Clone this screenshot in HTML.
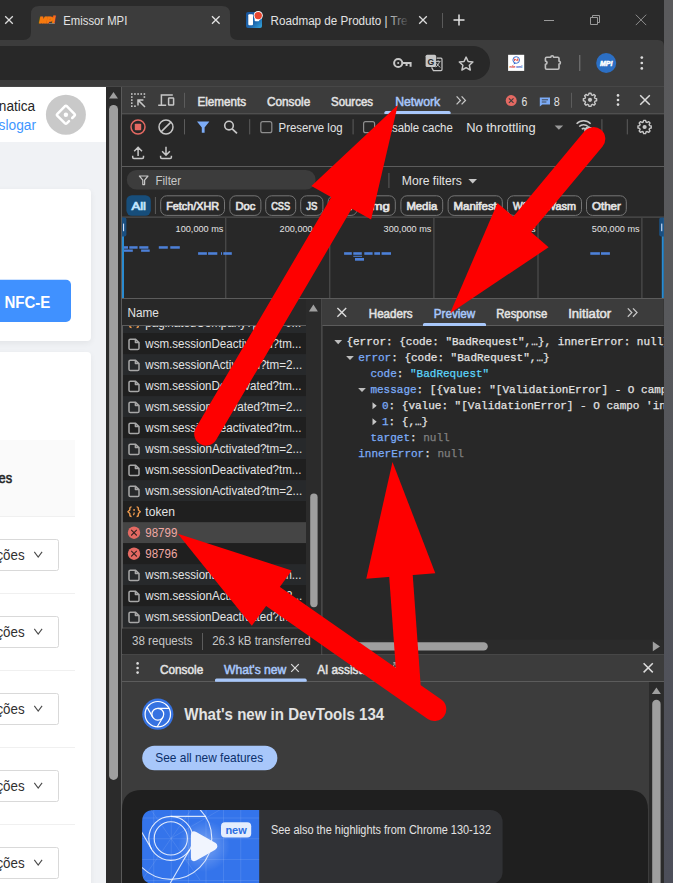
<!DOCTYPE html>
<html lang="pt-BR"><head><meta charset="utf-8"><title>Emissor MPI</title>
<style>
html,body{margin:0;padding:0;background:#282828;overflow:hidden}
body{width:673px;height:883px;font-family:'Liberation Sans',sans-serif}
svg{display:block;position:absolute;left:0;top:0}
text{font-family:'Liberation Sans',sans-serif;white-space:pre}
text.m{font-family:'Liberation Mono','DejaVu Sans Mono',monospace}
</style></head><body>
<svg width="673" height="883" viewBox="0 0 673 883">
<defs><linearGradient id="fade2" x1="0" x2="1" y1="0" y2="0"><stop offset="0" stop-color="#2a2a2a" stop-opacity="0"/><stop offset="1" stop-color="#2a2a2a"/></linearGradient><linearGradient id="trello" x1="0" y1="0" x2="1" y2="1"><stop offset="0" stop-color="#17539a"/><stop offset=".6" stop-color="#1d66ad"/><stop offset="1" stop-color="#35a9df"/></linearGradient><linearGradient id="strip" x1="0" y1="0" x2="0" y2="1"><stop offset="0" stop-color="#5a5a5c"/><stop offset=".35" stop-color="#58595c"/><stop offset="1" stop-color="#4c4e59"/></linearGradient></defs>
<rect x="0" y="0" width="664" height="40" fill="#2a2a2a"/>
<rect x="664" y="0" width="9" height="883" fill="url(#strip)"/>
<path d="M0 40 H658 Q664 40 664 46 V87 H0 Z" fill="#3c3c3c"/>
<rect x="0" y="86" width="664" height="1" fill="#474747"/>
<path d="M23 40 Q31 40 31 32 L31 14 Q31 6 39 6 L222 6 Q230 6 230 14 L230 32 Q230 40 238 40 Z" fill="#3c3c3c"/>
<path d="M5.2 16.2 L12.8 23.8 M12.8 16.2 L5.2 23.8" fill="none" stroke="#dcdcdc" stroke-width="1.3"/>
<text x="39.2" y="22.6" font-size="8.4" fill="#f7790d" font-weight="700" textLength="15.4" lengthAdjust="spacingAndGlyphs" stroke="#f7790d" stroke-width="1.2" font-style="italic">MPi</text>
<rect x="49" y="23.3" width="6" height="0.7" fill="#8a8a8a"/>
<circle cx="53.6" cy="16.6" r="0.8" fill="#f04e23"/>
<text x="63.3" y="24.6" font-size="12" fill="#e3e3e3" textLength="64" lengthAdjust="spacingAndGlyphs">Emissor MPI</text>
<path d="M212 16.2 L219.6 23.8 M219.6 16.2 L212 23.8" fill="none" stroke="#e3e3e3" stroke-width="1.3"/>
<rect x="246" y="12" width="16" height="16" fill="url(#trello)" rx="2"/>
<rect x="248.3" y="14.3" width="4.7" height="10.9" fill="#fff" rx="1"/>
<rect x="254.6" y="14.3" width="4.7" height="7" fill="#fff" rx="1"/>
<circle cx="258.2" cy="15.6" r="4.6" fill="#fff"/>
<circle cx="258.2" cy="15.6" r="3.7" fill="#e8452f"/>
<text x="270.6" y="24.6" font-size="12" fill="#e3e3e3" textLength="137" lengthAdjust="spacingAndGlyphs">Roadmap de Produto | Tre</text>
<rect x="386" y="10" width="24" height="22" fill="url(#fade2)"/>
<path d="M419.2 16.2 L426.8 23.8 M426.8 16.2 L419.2 23.8" fill="none" stroke="#dcdcdc" stroke-width="1.3"/>
<rect x="442" y="13" width="1" height="15" fill="#5a5a5a"/>
<path d="M453.5 20 H464.5 M459 14.5 V25.5" fill="none" stroke="#e3e3e3" stroke-width="1.5"/>
<path d="M544 20.5 H554" fill="none" stroke="#9a9a9a" stroke-width="1"/>
<path d="M590.5 17.5 h7 v7 h-7 z M592.5 17.5 v-2 h7 v7 h-2" fill="none" stroke="#9a9a9a" stroke-width="1" stroke-linejoin="round"/>
<path d="M635.8 14.7 L646.2 25.1 M646.2 14.7 L635.8 25.1" fill="none" stroke="#8e8e8e" stroke-width="1"/>
<rect x="-30" y="46" width="520" height="34" fill="#282828" rx="17"/>
<circle cx="398.2" cy="63" r="4.1" fill="none" stroke="#c7c7c7" stroke-width="2"/>
<circle cx="398.2" cy="63" r="1" fill="#c7c7c7"/>
<path d="M402.5 63 H410.6 V66.8 M406.6 63 V66" fill="none" stroke="#c7c7c7" stroke-width="2" stroke-linejoin="miter"/>
<rect x="425.6" y="54.7" width="10.5" height="12.2" fill="#c7c7c7" rx="1.5"/>
<path d="M436.6 58.2 H441 Q442 58.2 442 59.2 V69.6 Q442 70.6 441 70.6 H433.4 L431.6 67.4" fill="none" stroke="#c7c7c7" stroke-width="1.2"/>
<text x="427.4" y="64.6" font-size="8.6" fill="#282828" font-weight="700">G</text>
<path d="M435.6 61.4 H440.6 M438.1 60.2 V61.4 M439.6 61.6 Q438.6 65 435.8 67.2 M436.6 63.2 Q437.8 65.8 440.4 67.4" fill="none" stroke="#c7c7c7" stroke-width="0.9"/>
<path d="M466.10 57.10 L468.15 61.47 L472.89 62.03 L469.36 65.28 L470.29 70.02 L466.10 67.70 L461.92 70.02 L462.85 65.28 L459.31 62.03 L464.05 61.47 Z" fill="none" stroke="#c7c7c7" stroke-width="1.5" stroke-linejoin="round"/>
<rect x="508.1" y="54.8" width="16.1" height="16.1" fill="#ffffff"/>
<circle cx="516.2" cy="60" r="3.3" fill="#fff" stroke="#2a63c9" stroke-width="0.9"/>
<path d="M514.2 62.6 L513.6 64.6 L515.8 63.2" fill="#2a63c9"/>
<path d="M514.6 61.2 V58.8 L516.2 60.4 L517.8 58.8 V61.2" fill="none" stroke="#e0382c" stroke-width="0.9"/>
<text x="509.6" y="67.6" font-size="4.4" fill="#d6281e" font-weight="700" textLength="6" lengthAdjust="spacingAndGlyphs">nfe</text>
<text x="516" y="67.6" font-size="4.4" fill="#2456c4" font-weight="700" textLength="6.4" lengthAdjust="spacingAndGlyphs">xml</text>
<path d="M546.6 57.2 H550.8 a1.4 1.4 0 0 1 2.8 0 H557.8 Q559 57.2 559 58.4 V61.3 a1.4 1.4 0 0 1 0 2.8 V68 Q559 69.2 557.8 69.2 H546.6 Q545.4 69.2 545.4 68 V64.3 a1.6 1.6 0 0 0 0 -3.2 V58.4 Q545.4 57.2 546.6 57.2 Z" fill="none" stroke="#c0c0c0" stroke-width="1.6" stroke-linejoin="round"/>
<rect x="579" y="55" width="1.4" height="16" fill="#6a6a6a"/>
<circle cx="606.2" cy="63" r="10" fill="#2c6fc4"/>
<text x="600" y="65.6" font-size="7" fill="#ffffff" font-weight="700" textLength="12.4" lengthAdjust="spacingAndGlyphs" stroke="#ffffff" stroke-width="0.5" font-style="italic">MPi</text>
<circle cx="641.8" cy="57.6" r="1.35" fill="#dcdcdc"/>
<circle cx="641.8" cy="63" r="1.35" fill="#dcdcdc"/>
<circle cx="641.8" cy="68.4" r="1.35" fill="#dcdcdc"/>
<defs><clipPath id="pgclip"><rect x="0" y="87" width="106" height="796"/></clipPath><filter id="sh" x="-20%" y="-20%" width="140%" height="140%"><feGaussianBlur stdDeviation="3"/></filter></defs>
<g clip-path="url(#pgclip)">
<rect x="0" y="87" width="106" height="796" fill="#f0f2f5"/>
<rect x="0" y="87" width="106" height="55" fill="#ffffff"/>
<text x="-1.2" y="111" font-size="15.4" fill="#262626" textLength="36.4" lengthAdjust="spacingAndGlyphs">natica</text>
<text x="-1.4" y="129.6" font-size="15.4" fill="#4096ff" textLength="37.4" lengthAdjust="spacingAndGlyphs">slogar</text>
<circle cx="65.9" cy="114.7" r="20" fill="#c9c9c9"/>
<path d="M64.8 106.4 L57.4 113.8 Q56.4 114.8 57.4 115.8 L64.8 123.2 Q65.9 124.2 67 123.2 L69 121.2 M67 106.4 L74.4 113.8 Q75.4 114.8 74.4 115.8 L72.2 118" fill="none" stroke="#ffffff" stroke-width="2.5" stroke-linecap="round"/>
<path d="M64.8 106.4 Q65.9 105.4 67 106.4" fill="none" stroke="#ffffff" stroke-width="2.5"/>
<circle cx="65.9" cy="114.8" r="2.2" fill="#ffffff"/>
<rect x="-10" y="191" width="101" height="152" fill="#000" rx="4" opacity="0.06" filter="url(#sh)"/>
<rect x="-10" y="189" width="101" height="152" fill="#ffffff" rx="4"/>
<rect x="-10" y="279.7" width="81" height="42.3" fill="#4091ff" rx="5"/>
<text x="4.4" y="307.6" font-size="15.6" fill="#ffffff" font-weight="700" textLength="46" lengthAdjust="spacingAndGlyphs">NFC-E</text>
<rect x="-10" y="354" width="101" height="560" fill="#000" rx="4" opacity="0.05" filter="url(#sh)"/>
<rect x="-10" y="352" width="101" height="560" fill="#ffffff" rx="4"/>
<rect x="0" y="440" width="75" height="76.5" fill="#fafafa"/>
<rect x="0" y="516" width="75" height="1" fill="#f0f0f0"/>
<text x="-1.4" y="483.4" font-size="15.4" fill="#262626" textLength="13.6" lengthAdjust="spacingAndGlyphs" stroke="#262626" stroke-width="0.6">es</text>
<rect x="-10.5" y="539.5" width="69" height="31" fill="#ffffff" rx="2" stroke="#d9d9d9" stroke-width="1"/>
<text x="-3.6" y="560" font-size="15.2" fill="#303030" textLength="28.2" lengthAdjust="spacingAndGlyphs">ções</text>
<path d="M34.3 551.8 L38.2 557 L42.1 551.8" fill="none" stroke="#4a4a4a" stroke-width="1.1"/>
<rect x="0" y="593" width="75" height="1" fill="#f0f0f0"/>
<rect x="-10.5" y="616.5" width="69" height="31" fill="#ffffff" rx="2" stroke="#d9d9d9" stroke-width="1"/>
<text x="-3.6" y="637" font-size="15.2" fill="#303030" textLength="28.2" lengthAdjust="spacingAndGlyphs">ções</text>
<path d="M34.3 628.8 L38.2 634 L42.1 628.8" fill="none" stroke="#4a4a4a" stroke-width="1.1"/>
<rect x="0" y="670" width="75" height="1" fill="#f0f0f0"/>
<rect x="-10.5" y="693.5" width="69" height="31" fill="#ffffff" rx="2" stroke="#d9d9d9" stroke-width="1"/>
<text x="-3.6" y="714" font-size="15.2" fill="#303030" textLength="28.2" lengthAdjust="spacingAndGlyphs">ções</text>
<path d="M34.3 705.8 L38.2 711 L42.1 705.8" fill="none" stroke="#4a4a4a" stroke-width="1.1"/>
<rect x="0" y="747" width="75" height="1" fill="#f0f0f0"/>
<rect x="-10.5" y="770.5" width="69" height="31" fill="#ffffff" rx="2" stroke="#d9d9d9" stroke-width="1"/>
<text x="-3.6" y="791" font-size="15.2" fill="#303030" textLength="28.2" lengthAdjust="spacingAndGlyphs">ções</text>
<path d="M34.3 782.8 L38.2 788 L42.1 782.8" fill="none" stroke="#4a4a4a" stroke-width="1.1"/>
<rect x="0" y="824" width="75" height="1" fill="#f0f0f0"/>
<rect x="-10.5" y="847.5" width="69" height="31" fill="#ffffff" rx="2" stroke="#d9d9d9" stroke-width="1"/>
<text x="-3.6" y="868" font-size="15.2" fill="#303030" textLength="28.2" lengthAdjust="spacingAndGlyphs">ções</text>
<path d="M34.3 859.8 L38.2 865 L42.1 859.8" fill="none" stroke="#4a4a4a" stroke-width="1.1"/>
</g>
<rect x="106" y="87" width="15" height="796" fill="#2b2b2b"/>
<path d="M109 98.6 L113.5 92 L118 98.6 Z" fill="#9f9f9f"/>
<rect x="109.1" y="104.9" width="8.9" height="675" fill="#9f9f9f" rx="4.4"/>
<rect x="121" y="87" width="1" height="796" fill="#5a5a5a"/>
<rect x="122" y="87" width="542" height="796" fill="#282828"/>
<rect x="122" y="87" width="542" height="26.5" fill="#3c3c3c"/>
<rect x="122" y="113.3" width="542" height="1" fill="#5c5c5c"/>
<rect x="131.0" y="93.2" width="1.6" height="1.6" fill="#c7c7c7"/>
<rect x="134.15" y="93.2" width="1.6" height="1.6" fill="#c7c7c7"/>
<rect x="131" y="96.25" width="1.6" height="1.6" fill="#c7c7c7"/>
<rect x="137.3" y="93.2" width="1.6" height="1.6" fill="#c7c7c7"/>
<rect x="131" y="99.3" width="1.6" height="1.6" fill="#c7c7c7"/>
<rect x="140.45" y="93.2" width="1.6" height="1.6" fill="#c7c7c7"/>
<rect x="131" y="102.35" width="1.6" height="1.6" fill="#c7c7c7"/>
<rect x="143.6" y="93.2" width="1.6" height="1.6" fill="#c7c7c7"/>
<rect x="131" y="105.4" width="1.6" height="1.6" fill="#c7c7c7"/>
<rect x="143.6" y="96.25" width="1.6" height="1.6" fill="#c7c7c7"/>
<rect x="134.15" y="105.4" width="1.6" height="1.6" fill="#c7c7c7"/>
<path d="M145 107 L138.4 100.4 M138 105.4 V100 H143.4" fill="none" stroke="#c7c7c7" stroke-width="1.5"/>
<path d="M161.4 105.3 V95 H172.8 M158.2 105.3 H166.2" fill="none" stroke="#c7c7c7" stroke-width="1.5"/>
<rect x="168.6" y="97.9" width="5" height="7.2" fill="none" rx="0.6" stroke="#c7c7c7" stroke-width="1.5"/>
<rect x="184" y="92.8" width="1" height="15" fill="#5c5c5c"/>
<text x="197.5" y="105.6" font-size="12" fill="#e3e3e3" textLength="48.6" lengthAdjust="spacingAndGlyphs" stroke="#e3e3e3" stroke-width="0.5">Elements</text>
<text x="267" y="105.6" font-size="12" fill="#e3e3e3" textLength="43.2" lengthAdjust="spacingAndGlyphs" stroke="#e3e3e3" stroke-width="0.5">Console</text>
<text x="331" y="105.6" font-size="12" fill="#e3e3e3" textLength="42" lengthAdjust="spacingAndGlyphs" stroke="#e3e3e3" stroke-width="0.5">Sources</text>
<text x="395.2" y="105.6" font-size="12" fill="#a8c7fa" textLength="45" lengthAdjust="spacingAndGlyphs" stroke="#a8c7fa" stroke-width="0.5">Network</text>
<rect x="384.5" y="111" width="66" height="3" fill="#a8c7fa" rx="1.5"/>
<rect x="384.5" y="112.5" width="66" height="1.5" fill="#a8c7fa"/>
<path d="M456.6 96.4 L460.4 100.4 L456.6 104.4 M461.6 96.4 L465.4 100.4 L461.6 104.4" fill="none" stroke="#c7c7c7" stroke-width="1.3"/>
<circle cx="511.2" cy="100.6" r="5.5" fill="#e46962"/>
<path d="M508.9 98.3 L513.5 102.9 M513.5 98.3 L508.9 102.9" fill="none" stroke="#3c3c3c" stroke-width="1.1"/>
<text x="521.4" y="105.6" font-size="12" fill="#e3e3e3" textLength="5.8" lengthAdjust="spacingAndGlyphs">6</text>
<path d="M539.8 97.4 H550 V104.6 H542.4 L539.8 106.6 Z" fill="#7cacf8"/>
<path d="M541.8 99.8 H548 M541.8 102 H546.4" fill="none" stroke="#3c3c3c" stroke-width="0.9"/>
<text x="553.8" y="105.6" font-size="12" fill="#e3e3e3" textLength="6" lengthAdjust="spacingAndGlyphs">8</text>
<rect x="571" y="92.8" width="1" height="15" fill="#5c5c5c"/>
<path d="M589.00 93.18 L591.00 93.18 L591.39 94.79 L592.56 95.28 L593.98 94.41 L595.39 95.82 L594.52 97.24 L595.01 98.41 L596.62 98.80 L596.62 100.80 L595.01 101.19 L594.52 102.36 L595.39 103.78 L593.98 105.19 L592.56 104.32 L591.39 104.81 L591.00 106.42 L589.00 106.42 L588.61 104.81 L587.44 104.32 L586.02 105.19 L584.61 103.78 L585.48 102.36 L584.99 101.19 L583.38 100.80 L583.38 98.80 L584.99 98.41 L585.48 97.24 L584.61 95.82 L586.02 94.41 L587.44 95.28 L588.61 94.79 Z" fill="none" stroke="#c7c7c7" stroke-width="1.4" stroke-linejoin="round"/>
<circle cx="590" cy="99.8" r="2.1" fill="#c7c7c7"/>
<circle cx="618" cy="95.4" r="1.3" fill="#dcdcdc"/>
<circle cx="618" cy="100" r="1.3" fill="#dcdcdc"/>
<circle cx="618" cy="104.6" r="1.3" fill="#dcdcdc"/>
<path d="M640.2 95.2 L649.8 104.8 M649.8 95.2 L640.2 104.8" fill="none" stroke="#dcdcdc" stroke-width="1.5"/>
<circle cx="138" cy="127" r="7" fill="none" stroke="#e46962" stroke-width="1.5"/>
<rect x="134.8" y="123.8" width="6.4" height="6.4" fill="#e46962" rx="0.8"/>
<circle cx="166" cy="127" r="7" fill="none" stroke="#c7c7c7" stroke-width="1.5"/>
<path d="M161.1 131.9 L170.9 122.1" fill="none" stroke="#c7c7c7" stroke-width="1.5"/>
<rect x="184" y="119.2" width="1" height="15.2" fill="#5c5c5c"/>
<path d="M197 121.4 H209.4 L204.6 127.4 V132.8 H201.8 V127.4 Z" fill="#7cacf8"/>
<circle cx="229" cy="125.6" r="4.3" fill="none" stroke="#c7c7c7" stroke-width="1.6"/>
<path d="M232.2 128.8 L237 133.4" fill="none" stroke="#c7c7c7" stroke-width="1.7"/>
<rect x="249.2" y="119.2" width="1" height="15.2" fill="#5c5c5c"/>
<rect x="260.8" y="121.7" width="11" height="11" fill="none" rx="2" stroke="#8e8e8e" stroke-width="1.2"/>
<text x="278.6" y="132" font-size="12" fill="#e3e3e3" textLength="64" lengthAdjust="spacingAndGlyphs">Preserve log</text>
<rect x="352.6" y="119.2" width="1" height="15.2" fill="#5c5c5c"/>
<rect x="363.6" y="121.7" width="11" height="11" fill="none" rx="2" stroke="#8e8e8e" stroke-width="1.2"/>
<text x="381.2" y="132" font-size="12" fill="#e3e3e3" textLength="71.6" lengthAdjust="spacingAndGlyphs">Disable cache</text>
<text x="466.2" y="132" font-size="12" fill="#e3e3e3" textLength="69.4" lengthAdjust="spacingAndGlyphs">No throttling</text>
<path d="M554.6 125.4 H563.2 L558.9 129.8 Z" fill="#9a9a9a"/>
<path d="M576.6 123.8 A9.6 9.6 0 0 1 590.6 123.8 M579.2 126.6 A6 6 0 0 1 588 126.6 M581.8 129.2 A2.6 2.6 0 0 1 585.4 129.2" fill="none" stroke="#c7c7c7" stroke-width="1.5"/>
<path d="M588.05 126.94 L589.15 126.94 L589.19 128.48 L589.68 128.69 L590.80 127.62 L591.58 128.40 L590.51 129.52 L590.72 130.01 L592.26 130.05 L592.26 131.15 L590.72 131.19 L590.51 131.68 L591.58 132.80 L590.80 133.58 L589.68 132.51 L589.19 132.72 L589.15 134.26 L588.05 134.26 L588.01 132.72 L587.52 132.51 L586.40 133.58 L585.62 132.80 L586.69 131.68 L586.48 131.19 L584.94 131.15 L584.94 130.05 L586.48 130.01 L586.69 129.52 L585.62 128.40 L586.40 127.62 L587.52 128.69 L588.01 128.48 Z" fill="none" stroke="#c7c7c7" stroke-width="1.4" stroke-linejoin="round"/>
<circle cx="588.6" cy="130.6" r="2.1" fill="#c7c7c7"/>
<rect x="601.4" y="119.2" width="1" height="15.2" fill="#5c5c5c"/>
<rect x="626.8" y="119.2" width="1" height="15.2" fill="#5c5c5c"/>
<path d="M643.60 120.38 L645.60 120.38 L645.99 121.99 L647.16 122.48 L648.58 121.61 L649.99 123.02 L649.12 124.44 L649.61 125.61 L651.22 126.00 L651.22 128.00 L649.61 128.39 L649.12 129.56 L649.99 130.98 L648.58 132.39 L647.16 131.52 L645.99 132.01 L645.60 133.62 L643.60 133.62 L643.21 132.01 L642.04 131.52 L640.62 132.39 L639.21 130.98 L640.08 129.56 L639.59 128.39 L637.98 128.00 L637.98 126.00 L639.59 125.61 L640.08 124.44 L639.21 123.02 L640.62 121.61 L642.04 122.48 L643.21 121.99 Z" fill="none" stroke="#c7c7c7" stroke-width="1.4" stroke-linejoin="round"/>
<circle cx="644.6" cy="127" r="2.1" fill="#c7c7c7"/>
<path d="M138.1 156 V147.6 M134.2 151.2 L138.1 147.3 L142 151.2 M132.7 155.8 V157.2 Q132.7 158.4 133.9 158.4 H142.3 Q143.5 158.4 143.5 157.2 V155.8" fill="none" stroke="#c7c7c7" stroke-width="1.5"/>
<path d="M166 146.8 V155 M162.1 151.2 L166 155.1 L169.9 151.2 M160.6 155.8 V157.2 Q160.6 158.4 161.8 158.4 H170.2 Q171.4 158.4 171.4 157.2 V155.8" fill="none" stroke="#c7c7c7" stroke-width="1.5"/>
<rect x="122" y="166" width="542" height="1" fill="#5c5c5c"/>
<rect x="126.8" y="170" width="188.8" height="19.6" fill="#3c3c3c" rx="9.8"/>
<path d="M139.4 176 H148 L144.6 180.2 V184.6 H142.8 V180.2 Z" fill="none" stroke="#c7c7c7" stroke-width="1.2" stroke-linejoin="round"/>
<text x="155.4" y="185" font-size="12" fill="#c7c7c7" textLength="25.8" lengthAdjust="spacingAndGlyphs">Filter</text>
<rect x="388.4" y="173" width="1" height="15" fill="#5c5c5c"/>
<text x="401.8" y="185" font-size="12" fill="#e3e3e3" textLength="60" lengthAdjust="spacingAndGlyphs">More filters</text>
<path d="M468.4 179 H477 L472.7 183.6 Z" fill="#c7c7c7"/>
<rect x="126.4" y="195.2" width="24.4" height="20.6" fill="#174e7b" rx="5.5"/>
<text x="131.4" y="209.8" font-size="11.8" fill="#c2e7ff" textLength="14.6" lengthAdjust="spacingAndGlyphs" stroke="#c2e7ff" stroke-width="0.7">All</text>
<rect x="154.9" y="197" width="1" height="17" fill="#5c5c5c"/>
<rect x="160.7" y="195.8" width="63.8" height="19.6" fill="none" rx="6" stroke="#757575" stroke-width="1"/>
<text x="166.2" y="209.8" font-size="11.8" fill="#e3e3e3" textLength="52.8" lengthAdjust="spacingAndGlyphs" stroke="#e3e3e3" stroke-width="0.7">Fetch/XHR</text>
<rect x="229.9" y="195.8" width="31.0" height="19.6" fill="none" rx="6" stroke="#757575" stroke-width="1"/>
<text x="235.4" y="209.8" font-size="11.8" fill="#e3e3e3" textLength="20.0" lengthAdjust="spacingAndGlyphs" stroke="#e3e3e3" stroke-width="0.7">Doc</text>
<rect x="265.7" y="195.8" width="30.0" height="19.6" fill="none" rx="6" stroke="#757575" stroke-width="1"/>
<text x="271.2" y="209.8" font-size="11.8" fill="#e3e3e3" textLength="19.0" lengthAdjust="spacingAndGlyphs" stroke="#e3e3e3" stroke-width="0.7">CSS</text>
<rect x="300.7" y="195.8" width="22.2" height="19.6" fill="none" rx="6" stroke="#757575" stroke-width="1"/>
<text x="306.2" y="209.8" font-size="11.8" fill="#e3e3e3" textLength="11.2" lengthAdjust="spacingAndGlyphs" stroke="#e3e3e3" stroke-width="0.7">JS</text>
<rect x="328.1" y="195.8" width="29.0" height="19.6" fill="none" rx="6" stroke="#757575" stroke-width="1"/>
<text x="333.6" y="209.8" font-size="11.8" fill="#e3e3e3" textLength="18.0" lengthAdjust="spacingAndGlyphs" stroke="#e3e3e3" stroke-width="0.7">Font</text>
<rect x="362.3" y="195.8" width="33.0" height="19.6" fill="none" rx="6" stroke="#757575" stroke-width="1"/>
<text x="367.8" y="209.8" font-size="11.8" fill="#e3e3e3" textLength="22.0" lengthAdjust="spacingAndGlyphs" stroke="#e3e3e3" stroke-width="0.7">Img</text>
<rect x="400.9" y="195.8" width="41.8" height="19.6" fill="none" rx="6" stroke="#757575" stroke-width="1"/>
<text x="406.4" y="209.8" font-size="11.8" fill="#e3e3e3" textLength="30.8" lengthAdjust="spacingAndGlyphs" stroke="#e3e3e3" stroke-width="0.7">Media</text>
<rect x="448.1" y="195.8" width="54.2" height="19.6" fill="none" rx="6" stroke="#757575" stroke-width="1"/>
<text x="453.6" y="209.8" font-size="11.8" fill="#e3e3e3" textLength="43.2" lengthAdjust="spacingAndGlyphs" stroke="#e3e3e3" stroke-width="0.7">Manifest</text>
<rect x="507.5" y="195.8" width="27.4" height="19.6" fill="none" rx="6" stroke="#757575" stroke-width="1"/>
<text x="513" y="209.8" font-size="11.8" fill="#e3e3e3" textLength="16.4" lengthAdjust="spacingAndGlyphs" stroke="#e3e3e3" stroke-width="0.7">WS</text>
<rect x="540.3" y="195.8" width="41.2" height="19.6" fill="none" rx="6" stroke="#757575" stroke-width="1"/>
<text x="545.8" y="209.8" font-size="11.8" fill="#e3e3e3" textLength="30.2" lengthAdjust="spacingAndGlyphs" stroke="#e3e3e3" stroke-width="0.7">Wasm</text>
<rect x="586.5" y="195.8" width="39.8" height="19.6" fill="none" rx="6" stroke="#757575" stroke-width="1"/>
<text x="592" y="209.8" font-size="11.8" fill="#e3e3e3" textLength="28.8" lengthAdjust="spacingAndGlyphs" stroke="#e3e3e3" stroke-width="0.7">Other</text>
<rect x="122" y="216.6" width="542" height="1" fill="#585858"/>
<rect x="225.3" y="218" width="1" height="80" fill="#555555"/>
<rect x="329.3" y="218" width="1" height="80" fill="#555555"/>
<rect x="433.4" y="218" width="1" height="80" fill="#555555"/>
<rect x="537.5" y="218" width="1" height="80" fill="#555555"/>
<rect x="641.4" y="218" width="1" height="80" fill="#555555"/>
<text x="175.6" y="232" font-size="9.9" fill="#e3e3e3" textLength="47.8" lengthAdjust="spacingAndGlyphs">100,000 ms</text>
<text x="279.6" y="232" font-size="9.9" fill="#e3e3e3" textLength="47.8" lengthAdjust="spacingAndGlyphs">200,000 ms</text>
<text x="383.6" y="232" font-size="9.9" fill="#e3e3e3" textLength="47.8" lengthAdjust="spacingAndGlyphs">300,000 ms</text>
<text x="487.8" y="232" font-size="9.9" fill="#e3e3e3" textLength="47.8" lengthAdjust="spacingAndGlyphs">400,000 ms</text>
<text x="591.8" y="232" font-size="9.9" fill="#e3e3e3" textLength="47.8" lengthAdjust="spacingAndGlyphs">500,000 ms</text>
<rect x="124" y="246.2" width="4" height="2.5" fill="#4d80d8"/>
<rect x="129.3" y="246.2" width="8.3" height="2.5" fill="#4d80d8"/>
<rect x="139.3" y="246.2" width="9.1" height="2.5" fill="#4d80d8"/>
<rect x="158.8" y="246.2" width="9.0" height="2.5" fill="#4d80d8"/>
<rect x="170.3" y="246.2" width="9.5" height="2.5" fill="#4d80d8"/>
<rect x="124" y="249.5" width="8.8" height="2.3" fill="#4d80d8"/>
<rect x="141.1" y="249.5" width="8.6" height="2.3" fill="#4d80d8"/>
<rect x="198.1" y="252.2" width="8.8" height="2.6" fill="#4d80d8"/>
<rect x="208.1" y="252.2" width="9.2" height="2.6" fill="#4d80d8"/>
<rect x="221" y="252.2" width="1" height="2.6" fill="#4d80d8"/>
<rect x="223.3" y="252.2" width="8.5" height="2.6" fill="#4d80d8"/>
<rect x="344.1" y="252.2" width="7.7" height="2.6" fill="#4d80d8"/>
<rect x="353.3" y="252.2" width="8.5" height="2.6" fill="#4d80d8"/>
<rect x="364.3" y="252.2" width="8.3" height="2.6" fill="#4d80d8"/>
<rect x="374.3" y="252.2" width="5.7" height="2.6" fill="#4d80d8"/>
<rect x="381.6" y="252.2" width="9.4" height="2.6" fill="#4d80d8"/>
<rect x="353.3" y="255.8" width="8.7" height="1" fill="#4d80d8"/>
<rect x="355" y="258" width="9" height="2.7" fill="#4d80d8"/>
<rect x="590.3" y="252.2" width="9.6" height="2.6" fill="#4d80d8"/>
<rect x="601" y="252.2" width="8.9" height="2.6" fill="#4d80d8"/>
<rect x="122" y="218" width="2" height="80" fill="#2a8bd0"/>
<path d="M122 217.6 H124.4 Q126.4 217.6 126.4 219.6 V234.6 Q126.4 236.6 124.4 236.6 H122 Z" fill="#1a4f80"/>
<rect x="123" y="223.6" width="1.1" height="7.6" fill="#d3e3fd"/>
<rect x="661.8" y="218" width="2" height="80" fill="#2a8bd0"/>
<path d="M663.8 217.6 H661.2 Q659.2 217.6 659.2 219.6 V234.6 Q659.2 236.6 661.2 236.6 H663.8 Z" fill="#1a4f80"/>
<rect x="661.2" y="223.6" width="1.1" height="7.6" fill="#d3e3fd"/>
<rect x="122" y="298" width="542" height="1" fill="#5c5c5c"/>
<defs><clipPath id="listclip"><rect x="122" y="325.5" width="184" height="302"/></clipPath><clipPath id="prevclip"><rect x="322" y="326" width="341.8" height="313.4"/></clipPath></defs>
<g clip-path="url(#listclip)">
<rect x="122" y="312.2" width="184" height="21" fill="#27292b"/>
<path d="M131.60 317.90 Q129.80 317.90 129.80 319.70 V321.00 L127.90 322.70 L129.80 324.40 V325.70 Q129.80 327.50 131.60 327.50 M136.60 317.90 Q138.40 317.90 138.40 319.70 V321.00 L140.30 322.70 L138.40 324.40 V325.70 Q138.40 327.50 136.60 327.50 " fill="none" stroke="#ee9a4d" stroke-width="1.4" stroke-linejoin="round"/>
<circle cx="134.1" cy="320.9" r="0.95" fill="#ee9a4d"/>
<path d="M134.1 323.50 V324.70 L133.3 326.10" fill="none" stroke="#ee9a4d" stroke-width="1.3"/>
<text x="145.3" y="327.4" font-size="12" fill="#e3e3e3" textLength="156" lengthAdjust="spacingAndGlyphs">paginatedCompany?page=0...</text>
<rect x="122" y="333.2" width="184" height="21" fill="#1f1f1f"/>
<path d="M130.4 339.20 H135.6 L139 342.60 V348.20 Q139 349.60 137.6 349.60 H130.4 Q129 349.60 129 348.20 V340.60 Q129 339.20 130.4 339.20 Z M135.4 339.20 V342.60 H139" fill="none" stroke="#a8a8a8" stroke-width="1.5" stroke-linejoin="round"/>
<text x="145.3" y="348.4" font-size="12" fill="#e3e3e3" textLength="156.2" lengthAdjust="spacingAndGlyphs">wsm.sessionDeactivated?tm...</text>
<rect x="122" y="354.2" width="184" height="21" fill="#27292b"/>
<path d="M130.4 360.20 H135.6 L139 363.60 V369.20 Q139 370.60 137.6 370.60 H130.4 Q129 370.60 129 369.20 V361.60 Q129 360.20 130.4 360.20 Z M135.4 360.20 V363.60 H139" fill="none" stroke="#a8a8a8" stroke-width="1.5" stroke-linejoin="round"/>
<text x="145.3" y="369.4" font-size="12" fill="#e3e3e3" textLength="157" lengthAdjust="spacingAndGlyphs">wsm.sessionActivated?tm=2...</text>
<rect x="122" y="375.2" width="184" height="21" fill="#1f1f1f"/>
<path d="M130.4 381.20 H135.6 L139 384.60 V390.20 Q139 391.60 137.6 391.60 H130.4 Q129 391.60 129 390.20 V382.60 Q129 381.20 130.4 381.20 Z M135.4 381.20 V384.60 H139" fill="none" stroke="#a8a8a8" stroke-width="1.5" stroke-linejoin="round"/>
<text x="145.3" y="390.4" font-size="12" fill="#e3e3e3" textLength="156.2" lengthAdjust="spacingAndGlyphs">wsm.sessionDeactivated?tm...</text>
<rect x="122" y="396.2" width="184" height="21" fill="#27292b"/>
<path d="M130.4 402.20 H135.6 L139 405.60 V411.20 Q139 412.60 137.6 412.60 H130.4 Q129 412.60 129 411.20 V403.60 Q129 402.20 130.4 402.20 Z M135.4 402.20 V405.60 H139" fill="none" stroke="#a8a8a8" stroke-width="1.5" stroke-linejoin="round"/>
<text x="145.3" y="411.4" font-size="12" fill="#e3e3e3" textLength="157" lengthAdjust="spacingAndGlyphs">wsm.sessionActivated?tm=2...</text>
<rect x="122" y="417.2" width="184" height="21" fill="#1f1f1f"/>
<path d="M130.4 423.20 H135.6 L139 426.60 V432.20 Q139 433.60 137.6 433.60 H130.4 Q129 433.60 129 432.20 V424.60 Q129 423.20 130.4 423.20 Z M135.4 423.20 V426.60 H139" fill="none" stroke="#a8a8a8" stroke-width="1.5" stroke-linejoin="round"/>
<text x="145.3" y="432.4" font-size="12" fill="#e3e3e3" textLength="156.2" lengthAdjust="spacingAndGlyphs">wsm.sessionDeactivated?tm...</text>
<rect x="122" y="438.2" width="184" height="21" fill="#27292b"/>
<path d="M130.4 444.20 H135.6 L139 447.60 V453.20 Q139 454.60 137.6 454.60 H130.4 Q129 454.60 129 453.20 V445.60 Q129 444.20 130.4 444.20 Z M135.4 444.20 V447.60 H139" fill="none" stroke="#a8a8a8" stroke-width="1.5" stroke-linejoin="round"/>
<text x="145.3" y="453.4" font-size="12" fill="#e3e3e3" textLength="157" lengthAdjust="spacingAndGlyphs">wsm.sessionActivated?tm=2...</text>
<rect x="122" y="459.2" width="184" height="21" fill="#1f1f1f"/>
<path d="M130.4 465.20 H135.6 L139 468.60 V474.20 Q139 475.60 137.6 475.60 H130.4 Q129 475.60 129 474.20 V466.60 Q129 465.20 130.4 465.20 Z M135.4 465.20 V468.60 H139" fill="none" stroke="#a8a8a8" stroke-width="1.5" stroke-linejoin="round"/>
<text x="145.3" y="474.4" font-size="12" fill="#e3e3e3" textLength="156.2" lengthAdjust="spacingAndGlyphs">wsm.sessionDeactivated?tm...</text>
<rect x="122" y="480.2" width="184" height="21" fill="#27292b"/>
<path d="M130.4 486.20 H135.6 L139 489.60 V495.20 Q139 496.60 137.6 496.60 H130.4 Q129 496.60 129 495.20 V487.60 Q129 486.20 130.4 486.20 Z M135.4 486.20 V489.60 H139" fill="none" stroke="#a8a8a8" stroke-width="1.5" stroke-linejoin="round"/>
<text x="145.3" y="495.4" font-size="12" fill="#e3e3e3" textLength="157" lengthAdjust="spacingAndGlyphs">wsm.sessionActivated?tm=2...</text>
<rect x="122" y="501.2" width="184" height="21" fill="#1f1f1f"/>
<path d="M131.60 506.90 Q129.80 506.90 129.80 508.70 V510.00 L127.90 511.70 L129.80 513.40 V514.70 Q129.80 516.50 131.60 516.50 M136.60 506.90 Q138.40 506.90 138.40 508.70 V510.00 L140.30 511.70 L138.40 513.40 V514.70 Q138.40 516.50 136.60 516.50 " fill="none" stroke="#ee9a4d" stroke-width="1.4" stroke-linejoin="round"/>
<circle cx="134.1" cy="509.9" r="0.95" fill="#ee9a4d"/>
<path d="M134.1 512.50 V513.70 L133.3 515.10" fill="none" stroke="#ee9a4d" stroke-width="1.3"/>
<text x="145.3" y="516.4" font-size="12" fill="#e3e3e3" textLength="29.6" lengthAdjust="spacingAndGlyphs">token</text>
<rect x="122" y="522.2" width="184" height="21" fill="#454545"/>
<circle cx="134" cy="532.7" r="6.2" fill="#e46962"/>
<path d="M131.2 529.90 L136.8 535.50 M136.8 529.90 L131.2 535.50" fill="none" stroke="#3a2422" stroke-width="1.1"/>
<text x="145.3" y="537.4" font-size="12" fill="#f0a9a4" textLength="32" lengthAdjust="spacingAndGlyphs">98799</text>
<rect x="122" y="543.2" width="184" height="21" fill="#1f1f1f"/>
<circle cx="134" cy="553.7" r="6.2" fill="#e46962"/>
<path d="M131.2 550.90 L136.8 556.50 M136.8 550.90 L131.2 556.50" fill="none" stroke="#3a2422" stroke-width="1.1"/>
<text x="145.3" y="558.4" font-size="12" fill="#f0a9a4" textLength="32" lengthAdjust="spacingAndGlyphs">98796</text>
<rect x="122" y="564.2" width="184" height="21" fill="#27292b"/>
<path d="M130.4 570.20 H135.6 L139 573.60 V579.20 Q139 580.60 137.6 580.60 H130.4 Q129 580.60 129 579.20 V571.60 Q129 570.20 130.4 570.20 Z M135.4 570.20 V573.60 H139" fill="none" stroke="#a8a8a8" stroke-width="1.5" stroke-linejoin="round"/>
<text x="145.3" y="579.4" font-size="12" fill="#e3e3e3" textLength="156.2" lengthAdjust="spacingAndGlyphs">wsm.sessionDeactivated?tm...</text>
<rect x="122" y="585.2" width="184" height="21" fill="#1f1f1f"/>
<path d="M130.4 591.20 H135.6 L139 594.60 V600.20 Q139 601.60 137.6 601.60 H130.4 Q129 601.60 129 600.20 V592.60 Q129 591.20 130.4 591.20 Z M135.4 591.20 V594.60 H139" fill="none" stroke="#a8a8a8" stroke-width="1.5" stroke-linejoin="round"/>
<text x="145.3" y="600.4" font-size="12" fill="#e3e3e3" textLength="157" lengthAdjust="spacingAndGlyphs">wsm.sessionActivated?tm=2...</text>
<rect x="122" y="606.2" width="184" height="21" fill="#27292b"/>
<path d="M130.4 612.20 H135.6 L139 615.60 V621.20 Q139 622.60 137.6 622.60 H130.4 Q129 622.60 129 621.20 V613.60 Q129 612.20 130.4 612.20 Z M135.4 612.20 V615.60 H139" fill="none" stroke="#a8a8a8" stroke-width="1.5" stroke-linejoin="round"/>
<text x="145.3" y="621.4" font-size="12" fill="#e3e3e3" textLength="156.2" lengthAdjust="spacingAndGlyphs">wsm.sessionDeactivated?tm...</text>
</g>
<rect x="122" y="299" width="1" height="356" fill="#5c5c5c"/>
<rect x="122" y="299" width="184" height="26" fill="#282828"/>
<rect x="122" y="325" width="184" height="1" fill="#5c5c5c"/>
<text x="127.4" y="316.5" font-size="12" fill="#e3e3e3" textLength="31.4" lengthAdjust="spacingAndGlyphs">Name</text>
<rect x="306" y="299" width="15.4" height="329" fill="#2b2b2b"/>
<path d="M308.9 311.4 L313.4 304.6 L317.9 311.4 Z" fill="#9f9f9f"/>
<rect x="310.2" y="493.5" width="7.4" height="113.8" fill="#9f9f9f" rx="3.7"/>
<rect x="122" y="627.6" width="199.4" height="1" fill="#5c5c5c"/>
<rect x="122" y="628.6" width="199.4" height="26" fill="#282828"/>
<text x="132" y="645" font-size="12" fill="#c7c7c7" textLength="60.6" lengthAdjust="spacingAndGlyphs">38 requests</text>
<rect x="202" y="633" width="1" height="17" fill="#5c5c5c"/>
<text x="212.2" y="645" font-size="12" fill="#c7c7c7" textLength="98.4" lengthAdjust="spacingAndGlyphs">26.3 kB transferred</text>
<rect x="321.4" y="299" width="1" height="356" fill="#5c5c5c"/>
<rect x="322.4" y="299" width="341.4" height="26" fill="#3c3c3c"/>
<rect x="322.4" y="325" width="341.4" height="1" fill="#5c5c5c"/>
<path d="M337.4 308 L346.2 316.8 M346.2 308 L337.4 316.8" fill="none" stroke="#dcdcdc" stroke-width="1.4"/>
<text x="368.8" y="317.6" font-size="12" fill="#e3e3e3" textLength="43.8" lengthAdjust="spacingAndGlyphs" stroke="#e3e3e3" stroke-width="0.5">Headers</text>
<text x="433.8" y="317.6" font-size="12" fill="#a8c7fa" textLength="41.4" lengthAdjust="spacingAndGlyphs" stroke="#a8c7fa" stroke-width="0.5">Preview</text>
<rect x="423" y="323" width="63" height="3" fill="#a8c7fa" rx="1.5"/>
<rect x="423" y="324.4" width="63" height="1.6" fill="#a8c7fa"/>
<text x="496.2" y="317.6" font-size="12" fill="#e3e3e3" textLength="51" lengthAdjust="spacingAndGlyphs" stroke="#e3e3e3" stroke-width="0.5">Response</text>
<text x="568.2" y="317.6" font-size="12" fill="#e3e3e3" textLength="43" lengthAdjust="spacingAndGlyphs" stroke="#e3e3e3" stroke-width="0.5">Initiator</text>
<path d="M627.8 308.4 L631.8 312.6 L627.8 316.8 M633 308.4 L637 312.6 L633 316.8" fill="none" stroke="#c7c7c7" stroke-width="1.3"/>
<g clip-path="url(#prevclip)">
<path d="M334.3 340 H342.09999999999997 L338.2 344.2 Z" fill="#bdbdbd"/>
<text class="m" x="346.4" y="344.7" font-size="11" stroke-width="0.25"><tspan fill="#e3e3e3" stroke="#e3e3e3">{error: {code: "BadRequest",…}, innerError: null}</tspan></text>
<path d="M346.1 355.9 H353.9 L350 360.09999999999997 Z" fill="#bdbdbd"/>
<text class="m" x="358.2" y="360.7" font-size="11" stroke-width="0.25"><tspan fill="#7cacf8" stroke="#7cacf8">error</tspan><tspan fill="#e3e3e3" stroke="#e3e3e3">: {code: "BadRequest",…}</tspan></text>
<text class="m" x="370.4" y="376.7" font-size="11" stroke-width="0.25"><tspan fill="#7cacf8" stroke="#7cacf8">code</tspan><tspan fill="#e3e3e3" stroke="#e3e3e3">: </tspan><tspan fill="#5cd5fb" stroke="#5cd5fb">"BadRequest"</tspan></text>
<path d="M358.1 387.9 H365.9 L362 392.09999999999997 Z" fill="#bdbdbd"/>
<text class="m" x="370.4" y="392.7" font-size="11" stroke-width="0.25"><tspan fill="#7cacf8" stroke="#7cacf8">message</tspan><tspan fill="#e3e3e3" stroke="#e3e3e3">: [{value: "[ValidationError] - O campo 'invoice.total' é inválido."}, {,…}]</tspan></text>
<path d="M372.5 402.2 L376.7 405.7 L372.5 409.2 Z" fill="#c7c7c7"/>
<text class="m" x="382" y="408.7" font-size="11" stroke-width="0.25"><tspan fill="#7cacf8" stroke="#7cacf8">0</tspan><tspan fill="#e3e3e3" stroke="#e3e3e3">: {value: "[ValidationError] - O campo 'invoice.total' é inválido."}</tspan></text>
<path d="M372.5 418.2 L376.7 421.7 L372.5 425.2 Z" fill="#c7c7c7"/>
<text class="m" x="382" y="424.7" font-size="11" stroke-width="0.25"><tspan fill="#7cacf8" stroke="#7cacf8">1</tspan><tspan fill="#e3e3e3" stroke="#e3e3e3">: {,…}</tspan></text>
<text class="m" x="370.4" y="440.7" font-size="11" stroke-width="0.25"><tspan fill="#7cacf8" stroke="#7cacf8">target</tspan><tspan fill="#e3e3e3" stroke="#e3e3e3">: </tspan><tspan fill="#808080" stroke="#808080">null</tspan></text>
<text class="m" x="358.2" y="456.7" font-size="11" stroke-width="0.25"><tspan fill="#7cacf8" stroke="#7cacf8">innerError</tspan><tspan fill="#e3e3e3" stroke="#e3e3e3">: </tspan><tspan fill="#808080" stroke="#808080">null</tspan></text>
</g>
<rect x="322.4" y="639.4" width="341.4" height="15" fill="#2b2b2b"/>
<rect x="330.6" y="642.2" width="157.2" height="8.4" fill="#9f9f9f" rx="4.2"/>
<path d="M652.8 641.6 L660 646.4 L652.8 651.2 Z" fill="#9f9f9f"/>
<defs><clipPath id="thumbclip"><path d="M259.2 884 H154.1 Q142.1 884 142.1 872 V822 Q142.1 810 154.1 810 H259.2 Z"/></clipPath><radialGradient id="glow"><stop offset="0" stop-color="#fff" stop-opacity=".35"/><stop offset="1" stop-color="#fff" stop-opacity="0"/></radialGradient></defs>
<rect x="122" y="654.4" width="542" height="1" fill="#5c5c5c"/>
<rect x="122" y="655.4" width="542" height="228" fill="#3c3c3c"/>
<rect x="122" y="681" width="542" height="1" fill="#5c5c5c"/>
<circle cx="137.6" cy="663.4" r="1.3" fill="#dcdcdc"/>
<circle cx="137.6" cy="668" r="1.3" fill="#dcdcdc"/>
<circle cx="137.6" cy="672.6" r="1.3" fill="#dcdcdc"/>
<text x="160" y="674.1" font-size="12" fill="#e3e3e3" textLength="43.2" lengthAdjust="spacingAndGlyphs" stroke="#e3e3e3" stroke-width="0.5">Console</text>
<text x="224" y="674.1" font-size="12" fill="#a8c7fa" textLength="62.4" lengthAdjust="spacingAndGlyphs" stroke="#a8c7fa" stroke-width="0.5">What's new</text>
<path d="M291.2 664.2 L298.8 671.8 M298.8 664.2 L291.2 671.8" fill="none" stroke="#dcdcdc" stroke-width="1.2"/>
<rect x="215" y="678.6" width="91.6" height="3" fill="#a8c7fa" rx="1.5"/>
<rect x="215" y="680" width="91.6" height="1.6" fill="#a8c7fa"/>
<text x="317.2" y="674.1" font-size="12" fill="#e3e3e3" textLength="70" lengthAdjust="spacingAndGlyphs" stroke="#e3e3e3" stroke-width="0.5">AI assistance</text>
<path d="M393.4 662.6 H396.6 M394.2 662.6 V664.6 L392.8 667.4 H397.2 L395.8 664.6 V662.6" fill="none" stroke="#c7c7c7" stroke-width="0.8"/>
<path d="M643.6 663.2 L652.8 672.4 M652.8 663.2 L643.6 672.4" fill="none" stroke="#dcdcdc" stroke-width="1.5"/>
<circle cx="157.8" cy="714.2" r="15.6" fill="#3672e1"/>
<circle cx="157.8" cy="714.2" r="12.7" fill="none" stroke="#ffffff" stroke-width="1.2"/>
<circle cx="157.8" cy="714.2" r="5.9" fill="none" stroke="#ffffff" stroke-width="1.2"/>
<path d="M157.8 708.3 H169 M152.7 717.2 L147.2 707.4 M162.9 717.2 L157.2 726.8" fill="none" stroke="#ffffff" stroke-width="1.2"/>
<text x="184.2" y="719.6" font-size="15.6" fill="#e3e3e3" font-weight="700" textLength="200" lengthAdjust="spacingAndGlyphs">What's new in DevTools 134</text>
<rect x="142.2" y="745.8" width="135.2" height="24.4" fill="#a8c7fa" rx="12.2"/>
<text x="155.3" y="761.8" font-size="12.2" fill="#0b2f6b" textLength="107.8" lengthAdjust="spacingAndGlyphs">See all new features</text>
<path d="M122 883 V810 Q122 790 142 790 H628 Q648 790 648 810 V883 Z" fill="#1f1f1f"/>
<rect x="142.1" y="810" width="360.5" height="74" fill="#303134" rx="12"/>
<g clip-path="url(#thumbclip)">
<rect x="142" y="810" width="118" height="74" fill="#3474eb"/>
<rect x="153.4" y="810" width="0.8" height="74" fill="#ffffff" opacity=".13"/>
<rect x="170.8" y="810" width="0.8" height="74" fill="#ffffff" opacity=".13"/>
<rect x="188.2" y="810" width="0.8" height="74" fill="#ffffff" opacity=".13"/>
<rect x="205.6" y="810" width="0.8" height="74" fill="#ffffff" opacity=".13"/>
<rect x="223" y="810" width="0.8" height="74" fill="#ffffff" opacity=".13"/>
<rect x="240.4" y="810" width="0.8" height="74" fill="#ffffff" opacity=".13"/>
<rect x="142" y="817.6" width="118" height="0.8" fill="#ffffff" opacity=".13"/>
<rect x="142" y="838.4" width="118" height="0.8" fill="#ffffff" opacity=".13"/>
<rect x="142" y="859.2" width="118" height="0.8" fill="#ffffff" opacity=".13"/>
<rect x="142" y="880" width="118" height="0.8" fill="#ffffff" opacity=".13"/>
<path d="M142 797 L200 880 M200 797 L142 880 M170.8 838.4 L235 801" fill="none" stroke="#ffffff" stroke-width="0.8" opacity=".13"/>
<circle cx="170.8" cy="838.4" r="41" fill="none" stroke="#ffffff" stroke-width="1.1" opacity=".8"/>
<circle cx="170.8" cy="838.4" r="22" fill="none" stroke="#ffffff" stroke-width="1.1" opacity=".85"/>
<circle cx="170.8" cy="838.4" r="16.6" fill="none" stroke="#ffffff" stroke-width="1.1" opacity=".85"/>
<path d="M170.8 816.4 H206 M189.8 849.4 L168 887 M151.8 849.4 L137 824" fill="none" stroke="#ffffff" stroke-width="1.1" opacity=".8"/>
<circle cx="204" cy="846" r="26" fill="url(#glow)"/>
<path d="M192.6 835 Q192.6 832 195.4 833.4 L214.4 844.2 Q217 846.2 214.4 848.2 L195.4 859 Q192.6 860.4 192.6 857.4 Z" fill="#f1f5fe" stroke="#f1f5fe" stroke-width="3.4" stroke-linejoin="round"/>
<rect x="221" y="822.3" width="30.2" height="15.2" fill="#e4edfd" rx="4"/>
<text x="225.4" y="834.2" font-size="11.4" fill="#2c6ee2" font-weight="700" textLength="21.4" lengthAdjust="spacingAndGlyphs">new</text>
</g>
<text x="271" y="833.6" font-size="12" fill="#e3e3e3" textLength="220" lengthAdjust="spacingAndGlyphs">See also the highlights from Chrome 130-132</text>
<rect x="649" y="682" width="14.8" height="201" fill="#2b2b2b"/>
<path d="M651.9 694 L656.4 687.4 L660.9 694 Z" fill="#9f9f9f"/>
<rect x="652.2" y="699.8" width="8.4" height="200" fill="#9f9f9f" rx="4.2"/>
<g fill="#fe0000" stroke="#fe0000" stroke-linecap="round" stroke-width="23.6">
<line x1="206" y1="433.9" x2="342.4" y2="201.4"/>
<path d="M397.8 105 L311.4 186.1 L371.1 219.4 Z" stroke="none"/>
<line x1="593.5" y1="138.9" x2="520.2" y2="226.8"/>
<path d="M450.1 313.2 L497.5 203 L548.6 247.3 Z" stroke="none"/>
<line x1="434.5" y1="709.2" x2="270" y2="594.4"/>
<path d="M177.8 533.8 L291.7 570.4 L251.8 625.8 Z" stroke="none"/>
<line x1="409.4" y1="693" x2="400.9" y2="575" stroke-linecap="butt"/>
<path d="M392.5 461.9 L366.3 578.7 L435.3 573.3 Z" stroke="none"/>
</g>
</svg>
</body></html>
